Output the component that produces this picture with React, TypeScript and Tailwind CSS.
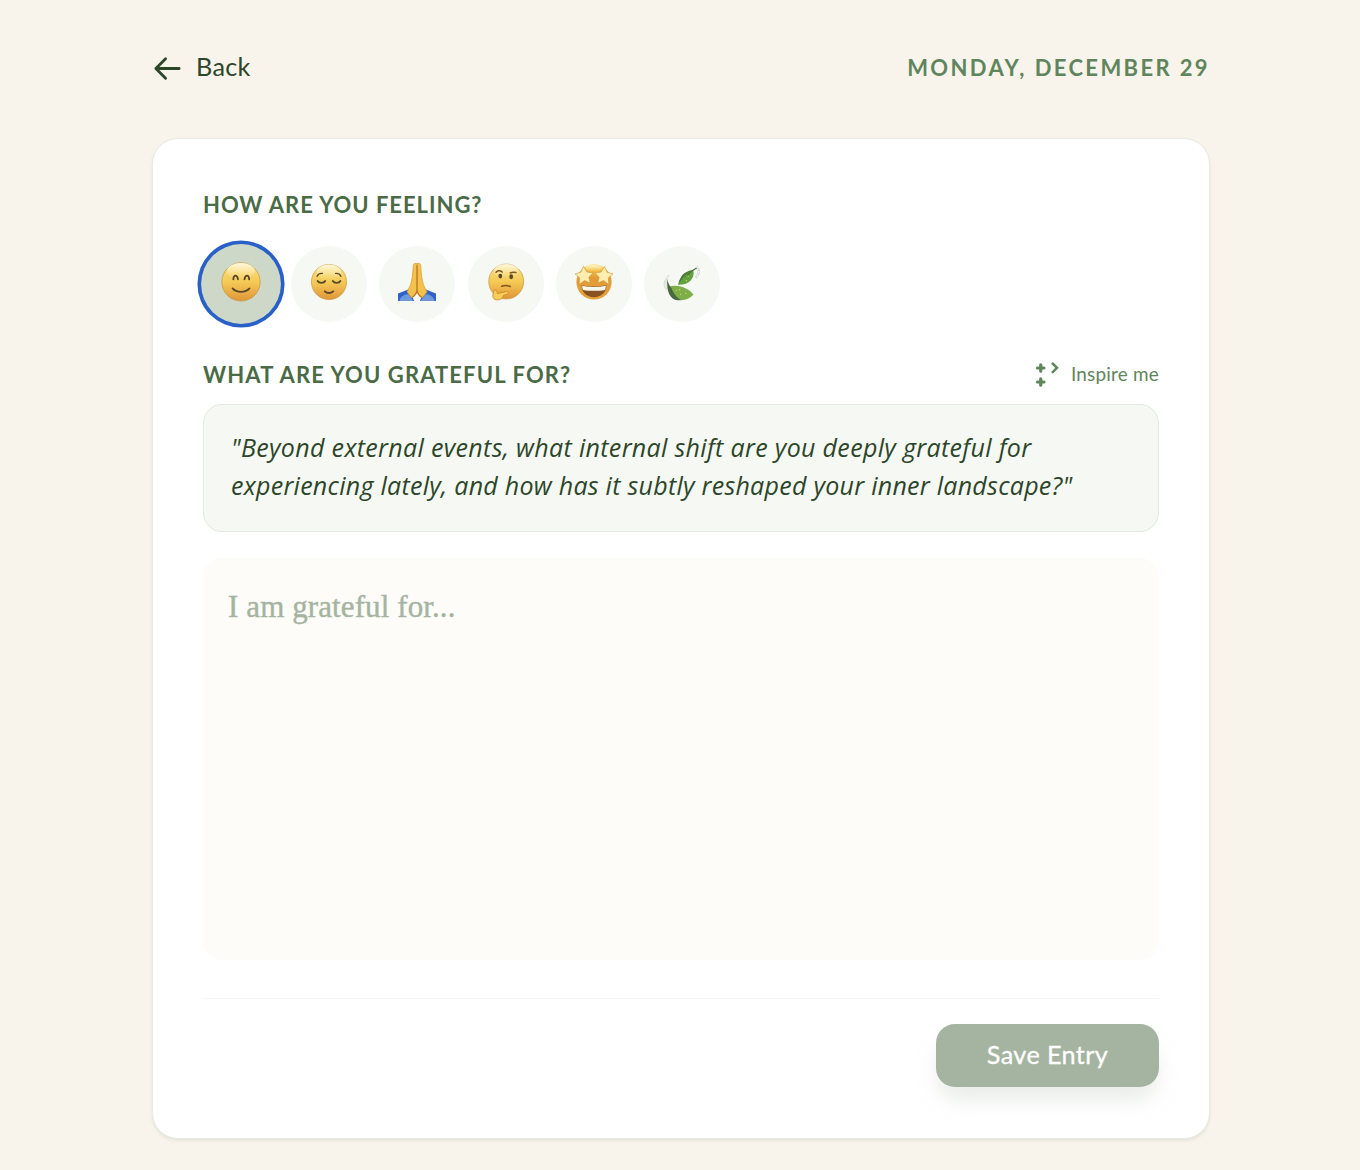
import { useState } from 'react';
import type { ReactNode } from 'react';

const SmileFace = () => (
  <>
    <circle cx="20" cy="20" r="19.2" fill="url(#face)" stroke="#c79440" strokeWidth="0.7" />
    <ellipse cx="20" cy="9" rx="14" ry="8" fill="url(#shine)" />
    <g fill="none" stroke="#574a2b" strokeWidth="1.8" strokeLinecap="round">
      <path d="M12.300 17.500c.3-5 4-5 4.700 0M23.500 17.500c.7-5 4.400-5 4.700 0" />
      <path d="M11.500 26.500c4 4.600 13 4.600 17 0" />
    </g>
  </>
);

const RelievedFace = () => (
  <>
    <circle cx="20" cy="20" r="18.500" fill="url(#face)" stroke="#c79440" strokeWidth="0.7" />
    <ellipse cx="20" cy="9.500" rx="13" ry="8" fill="url(#shine)" />
    <g fill="none" stroke="#574a2b" strokeWidth="1.4" strokeLinecap="round">
      <path d="M7.500 14c1-2.200 3.200-3.200 5.500-3M27 11c2.300-.2 4.500.8 5.500 3" />
      <path d="M8 19c1.500 2.500 6.500 2.500 8 0M24 19c1.500 2.500 6.500 2.500 8 0" strokeWidth="2" />
      <path d="M15.500 29.800c2.500 2.400 6.500 2.400 9 0" strokeWidth="1.900" />
    </g>
  </>
);

const PrayingHands = () => (
  <>
    <path d="M0 32 11.500 27.500 17 40H0zM40 32 28.500 27.500 23 40h17z" fill="#2f63c9" />
    <path d="M1.500 40c1-5 6-7 10-7l4.500 7zM38.500 40c-1-5-6-7-10-7L24 40z" fill="#6d98dc" />
    <path d="M19.800 0.500h-2.100c-1.200 0-1.500 1.300-1.700 3.500-.6 8-1 13-2.800 19L9.500 30.500l5 6c2.800-1 4.500-3 5.300-6.500z" fill="#f4c14b" stroke="#d8962e" strokeWidth=".7" />
    <path d="M20.200 0.500h2.100c1.200 0 1.500 1.300 1.700 3.500.6 8 1 13 2.800 19l3.700 7.500-5 6c-2.800-1-4.500-3-5.300-6.500z" fill="#f4c14b" stroke="#d8962e" strokeWidth=".7" />
    <path d="M20 2.500v25c0 4-2 6.500-5 8.500M20 27.500c0 4 2 6.500 5 8.500" fill="none" stroke="#b97724" strokeWidth="1.200" />
  </>
);

const ThinkingFace = () => (
  <>
    <circle cx="20.200" cy="19.500" r="18.400" fill="url(#face)" stroke="#c79440" strokeWidth="0.7" />
    <ellipse cx="20.200" cy="8.500" rx="13" ry="7.500" fill="url(#shine)" />
    <ellipse cx="14" cy="13.800" rx="2" ry="2.600" fill="#5d4826" />
    <ellipse cx="25.500" cy="14.500" rx="2" ry="2.600" fill="#5d4826" />
    <g fill="none" stroke="#80561f" strokeWidth="1.600" strokeLinecap="round">
      <path d="M9.500 9.700c1.500-1.700 4.300-2 6.500-.2M24.500 10.500c2-.9 4-1 6-.5" />
      <path d="M15.500 24.500c3-1.200 6-1 9 .3" />
    </g>
    <path d="M7 30.500c0-2.500 2.500-3 3.200-.5l1 2.200 9.300-2.200c2-.5 3 1.800 1.200 2.500l-4.700 2c-.5 3-3 4.300-6 4.300-4.500 0-6-3-4-8.300z" fill="#f8cd55" stroke="#c98a2a" strokeWidth="0.900" />
  </>
);

const StarFace = () => (
  <>
    <circle cx="20" cy="20" r="18.500" fill="url(#starFace)" />
    <ellipse cx="20" cy="5.500" rx="9" ry="3.500" fill="url(#shine)" />
    <path d="m9 3.500 3.500 6 6.500 1-4.500 4.500 1.500 6-6-2.500-5.500 4 .3-7L0 11.500l6.200-1.800zM31 3.500l-3.500 6-6.500 1 4.500 4.500-1.500 6 6-2.500 5.500 4-.3-7 4.800-4-6.200-1.800z" fill="#ffeeb0" stroke="#cf9238" strokeWidth=".6" strokeLinejoin="round" />
    <path d="M7 23.500c8 1.800 18 1.800 26 0 0 8-5.500 12.500-13 12.500s-13-4.500-13-12.500z" fill="#87521f" />
    <path d="M7.500 24c8 1.700 17 1.700 25 0 0 2-.4 3.300-1 4.300-7 1.300-16 1.300-23 0-.6-1-1-2.300-1-4.300z" fill="#f5f7ef" />
  </>
);

const Leaves = () => (
  <>
    <g fill="none" stroke="#d5dfd5" strokeWidth="1.100" strokeLinecap="round">
      <path d="M6 13c-4 4-4 11 0 15M3 17c-3 4-2 9 1 11M36 3c2 4 1 8-2 12M38 6c1.500 4 0 7-3 10" />
    </g>
    <path d="M16 22.800C18 15 21 8.500 32 7.500 33.500 16 28 23 16 22.800z" fill="#62a23e" />
    <path d="M16 22.800C18 15 21 8.500 32 7.500 25 10 20 16 16 22.800z" fill="#4a7a3c" />
    <path d="M35 5.500c-3 1.500-6 3.500-9 7" fill="none" stroke="#48733a" strokeWidth="1.400" strokeLinecap="round" />
    <path d="M6 25c7-2.500 20-.5 26 8.500C24 42 8 42 6 25z" fill="#7eae48" />
    <path d="M4.500 16.500c.5 4 2 6.500 4.500 10 2.500 6.500 5.500 9.500 10 12.500C8 41 3.500 31 4.500 16.500z" fill="#47693d" />
    <path d="M13.500 29h1M18 33h1M23.500 32h1M26 14h1M24 18.500h1M17 28h1" stroke="#e6d95e" strokeWidth="1.200" />
  </>
);

const moods: { id: string; icon: ReactNode }[] = [
  { id: 'happy', icon: <SmileFace /> },
  { id: 'calm', icon: <RelievedFace /> },
  { id: 'thankful', icon: <PrayingHands /> },
  { id: 'thoughtful', icon: <ThinkingFace /> },
  { id: 'excited', icon: <StarFace /> },
  { id: 'growing', icon: <Leaves /> },
];

export default function App() {
  const [mood, setMood] = useState('happy');
  const [entry, setEntry] = useState('');

  return (
    <div className="h-[1170px] overflow-hidden bg-[#f8f3eb] font-['Lato',sans-serif]">
      <svg className="absolute h-0 w-0" aria-hidden="true">
        <defs>
          <linearGradient id="face" x1="0" y1="0" x2="0" y2="1">
            <stop offset="0" stopColor="#fae08a" />
            <stop offset="0.500" stopColor="#f5ca55" />
            <stop offset="1" stopColor="#df9538" />
          </linearGradient>
          <linearGradient id="shine" x1="0" y1="0" x2="0" y2="1">
            <stop offset="0" stopColor="#fffbe6" stopOpacity="0.9" />
            <stop offset="1" stopColor="#fff3b8" stopOpacity="0" />
          </linearGradient>
          <linearGradient id="starFace" x1="0" y1="0" x2="0" y2="1">
            <stop offset="0" stopColor="#fbd44c" />
            <stop offset="0.400" stopColor="#e29a37" />
            <stop offset="1" stopColor="#e6a13a" />
          </linearGradient>
        </defs>
      </svg>

      <div className="mx-auto ml-[152px] w-[1058px] pt-[48px]">
        {/* Header */}
        <header className="flex h-10 items-center justify-between">
          <button className="flex items-center text-[25.200px] tracking-[0.300px] text-[#2d4629]">
            <svg className="mt-0.5 mr-[13px] h-[31px] w-[31px]" viewBox="0 0 24 24" fill="none" stroke="currentColor" strokeWidth="2.200" strokeLinecap="round" strokeLinejoin="round">
              <path d="M21 12H3M10.500 4.500 3 12l7.500 7.500" />
            </svg>
            <span className="pb-0.5">Back</span>
          </button>
          <span className="pb-0.5 text-[22px] font-bold tracking-[2.380px] text-[#5f855c]">MONDAY, DECEMBER 29</span>
        </header>

        {/* Entry card */}
        <main className="mt-[50px] h-[1001px] rounded-[26px] border border-[#e6ebe3] bg-white px-[50px] shadow-[0_2px_3px_rgba(95,133,92,0.12)]">
          <h2 className="mt-[51px] h-[30px] text-[22px] leading-[30px] font-bold tracking-[0.970px] text-[#4a6b45]">HOW ARE YOU FEELING?</h2>

          <div className="mt-[26px] flex gap-[12.200px]">
            {moods.map((item) => (
              <button
                key={item.id}
                onClick={() => setMood(item.id)}
                className={`flex h-[76px] w-[76px] items-center justify-center rounded-full ${
                  mood === item.id ? 'scale-[1.05] bg-[#cdd8c9] ring-[3.500px] ring-[#2860c8]' : 'bg-[#f5f8f3]'
                }`}
              >
                <svg className="mb-1 h-[38px] w-[38px] overflow-visible" viewBox="0 0 40 40">
                  {item.icon}
                </svg>
              </button>
            ))}
          </div>

          <div className="mt-[37px] flex h-[30px] items-center justify-between">
            <h2 className="text-[22px] font-bold tracking-[1.120px] text-[#4a6b45]">WHAT ARE YOU GRATEFUL FOR?</h2>
            <button className="flex items-center gap-[12px] text-[18.900px] tracking-[0.220px] text-[#5f855c]">
              <svg className="h-[26px] w-[24px]" viewBox="0 0 24 26" fill="none" stroke="currentColor" strokeWidth="3.200" strokeLinecap="round">
                <path d="M2.500 7h6.500M5.750 3.750v6.500M2.500 21h6.500M5.750 17.750v6.500" />
                <path d="m17 1.800 5 5-5 5" strokeWidth="2.500" strokeLinecap="butt" />
              </svg>
              <span>Inspire me</span>
            </button>
          </div>

          <div className="mt-[15px] h-[128px] rounded-[19px] border border-[#e4eae1] bg-[#f5f8f3] px-[27px] pt-[23px] font-['Open_Sans',sans-serif] text-[25px] leading-[38px] text-[#2d4629] italic">
            <p className="tracking-[0.330px] whitespace-nowrap">"Beyond external events, what internal shift are you deeply grateful for</p>
            <p className="tracking-[0.270px] whitespace-nowrap">experiencing lately, and how has it subtly reshaped your inner landscape?"</p>
          </div>

          <textarea
            value={entry}
            onChange={(e) => setEntry(e.target.value)}
            placeholder="I am grateful for..."
            className="mt-[26px] block h-[402px] w-full resize-none rounded-[19px] bg-[#fdfcf8] px-[25px] py-[26px] font-['Liberation_Serif',serif] text-[31px] leading-[46px] tracking-[0.100px] text-[#2d4629] outline-none placeholder:text-[#a5b4a1] placeholder:[-webkit-text-stroke:0.400px_#a5b4a1]"
          />

          <div className="mt-[38px] flex justify-end border-t border-[#f3f6f2] pt-[25px]">
            <button className="h-[63px] w-[223px] rounded-[19px] bg-[#a5b4a1] pb-[2px] text-[25.200px] tracking-[0.400px] text-white shadow-[0_15px_22px_-4px_rgba(165,180,161,0.28)] [-webkit-text-stroke:0.300px_white]">
              Save Entry
            </button>
          </div>
        </main>
      </div>
    </div>
  );
}
